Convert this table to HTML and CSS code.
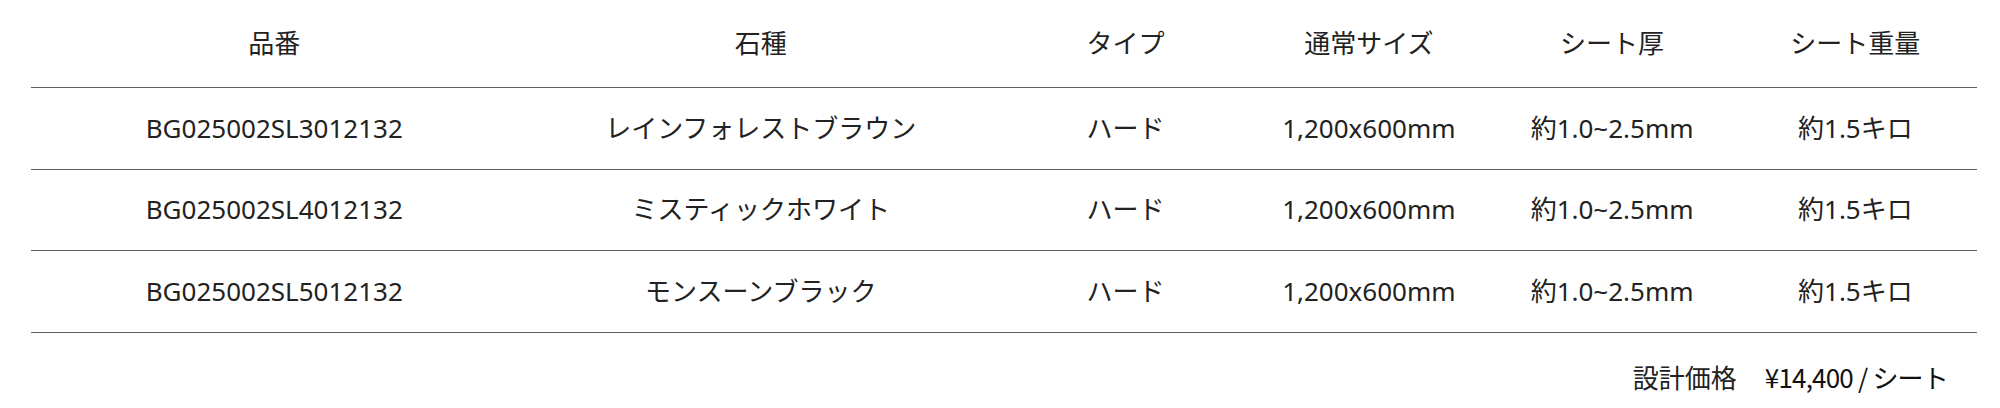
FILE: index.html
```html
<!DOCTYPE html>
<html lang="ja">
<head>
<meta charset="utf-8">
<title>製品仕様</title>
<link rel="stylesheet" href="styles.css">
</head>
<body>
<div class="spec">
  <div class="row head">
    <div class="cell">品番</div>
    <div class="cell">石種</div>
    <div class="cell">タイプ</div>
    <div class="cell">通常サイズ</div>
    <div class="cell">シート厚</div>
    <div class="cell">シート重量</div>
  </div>
  <div class="row">
    <div class="cell">BG025002SL3012132</div>
    <div class="cell">レインフォレストブラウン</div>
    <div class="cell">ハード</div>
    <div class="cell">1,200x600mm</div>
    <div class="cell">約1.0~2.5mm</div>
    <div class="cell">約1.5キロ</div>
  </div>
  <div class="row">
    <div class="cell">BG025002SL4012132</div>
    <div class="cell">ミスティックホワイト</div>
    <div class="cell">ハード</div>
    <div class="cell">1,200x600mm</div>
    <div class="cell">約1.0~2.5mm</div>
    <div class="cell">約1.5キロ</div>
  </div>
  <div class="row">
    <div class="cell">BG025002SL5012132</div>
    <div class="cell">モンスーンブラック</div>
    <div class="cell">ハード</div>
    <div class="cell">1,200x600mm</div>
    <div class="cell">約1.0~2.5mm</div>
    <div class="cell">約1.5キロ</div>
  </div>
  <div class="price">
    <span class="price-label">設計価格</span>
    <span class="price-value">¥14,400 / シート</span>
  </div>
</div>
</body>
</html>
```
FILE: styles.css
```css
html, body {
  margin: 0;
  padding: 0;
  background: #ffffff;
}
body {
  font-family: "Noto Sans", "Noto Sans CJK JP", sans-serif;
  font-size: 26px;
  color: #222222;
}
.spec {
  padding: 0 23px 0 31px;
}
.row {
  display: grid;
  grid-template-columns: 2fr 2fr 1fr 1fr 1fr 1fr;
  align-items: center;
  box-sizing: border-box;
  height: 81.67px;
  border-bottom: 1px solid #5f5f5f;
}
.row.head {
  height: 88px;
}
.cell {
  text-align: center;
  line-height: 1.2;
  white-space: nowrap;
}
.price {
  display: flex;
  justify-content: flex-end;
  align-items: center;
  gap: 28px;
  padding: 24px 29px 0 0;
  line-height: 40px;
  font-family: "Noto Sans CJK JP", sans-serif;
}
.price-value {
  font-weight: 400;
  color: #111111;
  letter-spacing: -0.8px;
}
```
